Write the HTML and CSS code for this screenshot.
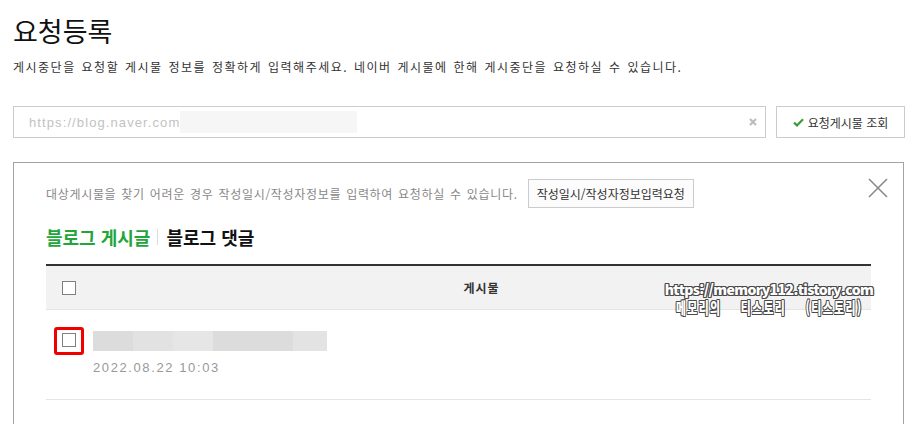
FILE: index.html
```html
<!DOCTYPE html>
<html lang="ko">
<head>
<meta charset="utf-8">
<title>요청등록</title>
<link rel="stylesheet" href="styles.css">
</head>
<body>
<div class="page">
  <h1 class="title">요청등록</h1>
  <p class="desc">게시중단을 요청할 게시물 정보를 정확하게 입력해주세요. 네이버 게시물에 한해 게시중단을 요청하실 수 있습니다.</p>
  <div class="search">
    <div class="url-field">
      <span class="url-ph">https://blog.naver.com</span>
      <span class="url-mask"></span>
      <svg class="url-clear" width="8" height="8" viewBox="0 0 8 8"><path d="M1 1L7 7M7 1L1 7" stroke="#bbb" stroke-width="2" fill="none"/></svg>
    </div>
    <button class="search-btn"><svg class="check" width="11" height="9" viewBox="0 0 11 9"><path d="M1 4.6L4 7.4L10 1.2" stroke="#3c9c3c" stroke-width="2.2" fill="none"/></svg><span>요청게시물 조회</span></button>
  </div>
  <div class="panel">
    <button class="close" aria-label="닫기"><svg width="20" height="20" viewBox="0 0 20 20"><path d="M1 1L19 19M19 1L1 19" stroke="#8a8a8a" stroke-width="1.6" fill="none"/></svg></button>
    <div class="info">
      <span class="info-text">대상게시물을 찾기 어려운 경우 작성일시/작성자정보를 입력하여 요청하실 수 있습니다.</span>
      <button class="info-btn">작성일시/작성자정보입력요청</button>
    </div>
    <div class="tabs">
      <span class="tab active">블로그 게시글</span>
      <span class="tab-sep"></span>
      <span class="tab">블로그 댓글</span>
    </div>
    <div class="list">
      <div class="list-head">
        <div class="col-check"><span class="cb"></span></div>
        <div class="col-main head-title">게시물</div>
      </div>
      <div class="list-row">
        <div class="col-check"><span class="hl"><span class="cb"></span></span></div>
        <div class="col-main">
          <div class="mask-bar"><span class="seg s1"></span><span class="seg s2"></span><span class="seg s3"></span><span class="seg s4"></span><span class="seg s5"></span></div>
          <div class="date">2022.08.22 10:03</div>
        </div>
      </div>
    </div>
    <div class="watermark">
      <div class="wm1">https://memory112.tistory.com</div>
      <div class="wm2"><span>메모리의 티스토리 (티스토리)</span></div>
    </div>
  </div>
</div>
</body>
</html>
```
FILE: styles.css
```css
* { box-sizing: border-box; margin: 0; padding: 0; }
html, body { background: #fff; }
body {
  font-family: "Noto Sans CJK KR", "Noto Sans", sans-serif;
  color: #333;
  height: 424px;
  overflow: hidden;
}
button { font-family: inherit; cursor: pointer; }

.page { padding: 15px 15px 0 13px; }

.title {
  font-size: 27px;
  font-weight: 400;
  line-height: 32px;
  color: #111;
}
.desc {
  margin-top: 12px;
  font-size: 12px;
  line-height: 16px;
  letter-spacing: 1.5px;
  word-spacing: 1px;
  color: #333;
}

.search { display: flex; gap: 10px; margin-top: 31px; height: 32px; }
.url-field {
  flex: 1;
  display: flex;
  align-items: center;
  border: 1px solid #ccc;
  padding: 0 8px 0 15px;
}
.url-ph {
  font-family: "Liberation Sans", Arial, sans-serif;
  font-size: 13px;
  letter-spacing: 1.1px;
  color: #c2c2c2;
}
.url-mask { width: 177px; height: 22px; background: #f6f6f6; }
.url-clear { margin-left: auto; }
.search-btn {
  width: 129px;
  border: 1px solid #ccc;
  background: #fff;
  display: flex;
  align-items: center;
  justify-content: center;
  gap: 4px;
  font-size: 12px;
  color: #333;
}

.panel {
  position: relative;
  margin-top: 24px;
  margin-right: 1px;
  border: 1px solid #a3a3a3;
  padding: 16px 32px 0;
  height: 300px;
}
.close {
  position: absolute;
  top: 15px;
  right: 15px;
  width: 20px;
  height: 20px;
  border: 0;
  background: none;
  display: flex;
}
.info { display: flex; align-items: center; gap: 10px; height: 29px; }
.info-text { font-size: 12px; color: #888; letter-spacing: 0.68px; word-spacing: 1px; }
.info-btn {
  height: 29px;
  padding: 0 8px;
  border: 1px solid #ccc;
  background: #fcfcfc;
  font-size: 12px;
  color: #333;
}

.tabs { display: flex; align-items: center; margin-top: 17px; height: 24px; }
.tab { font-size: 18px; font-weight: 700; line-height: 24px; color: #111; }
.tab.active { color: #22a63c; }
.tab-sep { width: 1px; height: 16px; background: #ddd; margin: 0 8px 0 7px; }

.list { margin-top: 15px; border-top: 2px solid #333; }
.list-head {
  display: flex;
  align-items: center;
  height: 44px;
  background: #f2f2f2;
  border-bottom: 1px solid #e4e4e4;
}
.col-check { width: 46px; flex: none; }
.list-head .col-check { padding-left: 16px; display: flex; }
.col-main { flex: 1; }
.head-title {
  text-align: center;
  font-size: 12px;
  font-weight: 700;
  letter-spacing: 1px;
  color: #333;
}
.cb {
  display: block;
  width: 14px;
  height: 14px;
  border: 1px solid #808080;
  background: #fff;
}
.list-row {
  display: flex;
  height: 90px;
  border-bottom: 1px solid #e4e4e4;
}
.list-row .col-check { padding: 17px 0 0 8px; }
.hl {
  display: block;
  width: 30px;
  height: 28px;
  border: 3px solid #f20000;
  border-radius: 3px;
  padding: 3px 0 0 5px;
}
.list-row .col-main { padding: 21px 0 0 1px; }
.mask-bar { display: flex; height: 20px; }
.seg { display: block; height: 20px; }
.s1 { width: 40px; background: #dcdcdc; }
.s2 { width: 40px; background: #e2e2e2; }
.s3 { width: 40px; background: #e6e6e6; }
.s4 { width: 80px; background: #dcdcdc; }
.s5 { width: 34px; background: #e3e3e3; }
.date {
  margin-top: 8px;
  font-family: "Liberation Sans", Arial, sans-serif;
  font-size: 13px;
  line-height: 18px;
  letter-spacing: 1.6px;
  color: #999;
}

.watermark {
  position: absolute;
  top: 118px;
  left: 605px;
  width: 300px;
  display: flex;
  flex-direction: column;
  align-items: center;
  color: #fff;
  font-weight: 900;
  line-height: 17px;
  text-shadow:
    1px 0 0 #4a4a4a, -1px 0 0 #4a4a4a, 0 1px 0 #4a4a4a, 0 -1px 0 #4a4a4a,
    1px 1px 0 #4a4a4a, -1px -1px 0 #4a4a4a, 1px -1px 0 #4a4a4a, -1px 1px 0 #4a4a4a;
}
.wm1 { font-size: 14px; letter-spacing: -0.6px; }
.wm2 { font-size: 16px; margin-top: 1px; white-space: nowrap; }
.wm2 span {
  display: inline-block;
  letter-spacing: 2px;
  word-spacing: 22px;
  transform: scaleX(0.68);
  white-space: nowrap;
}
```
